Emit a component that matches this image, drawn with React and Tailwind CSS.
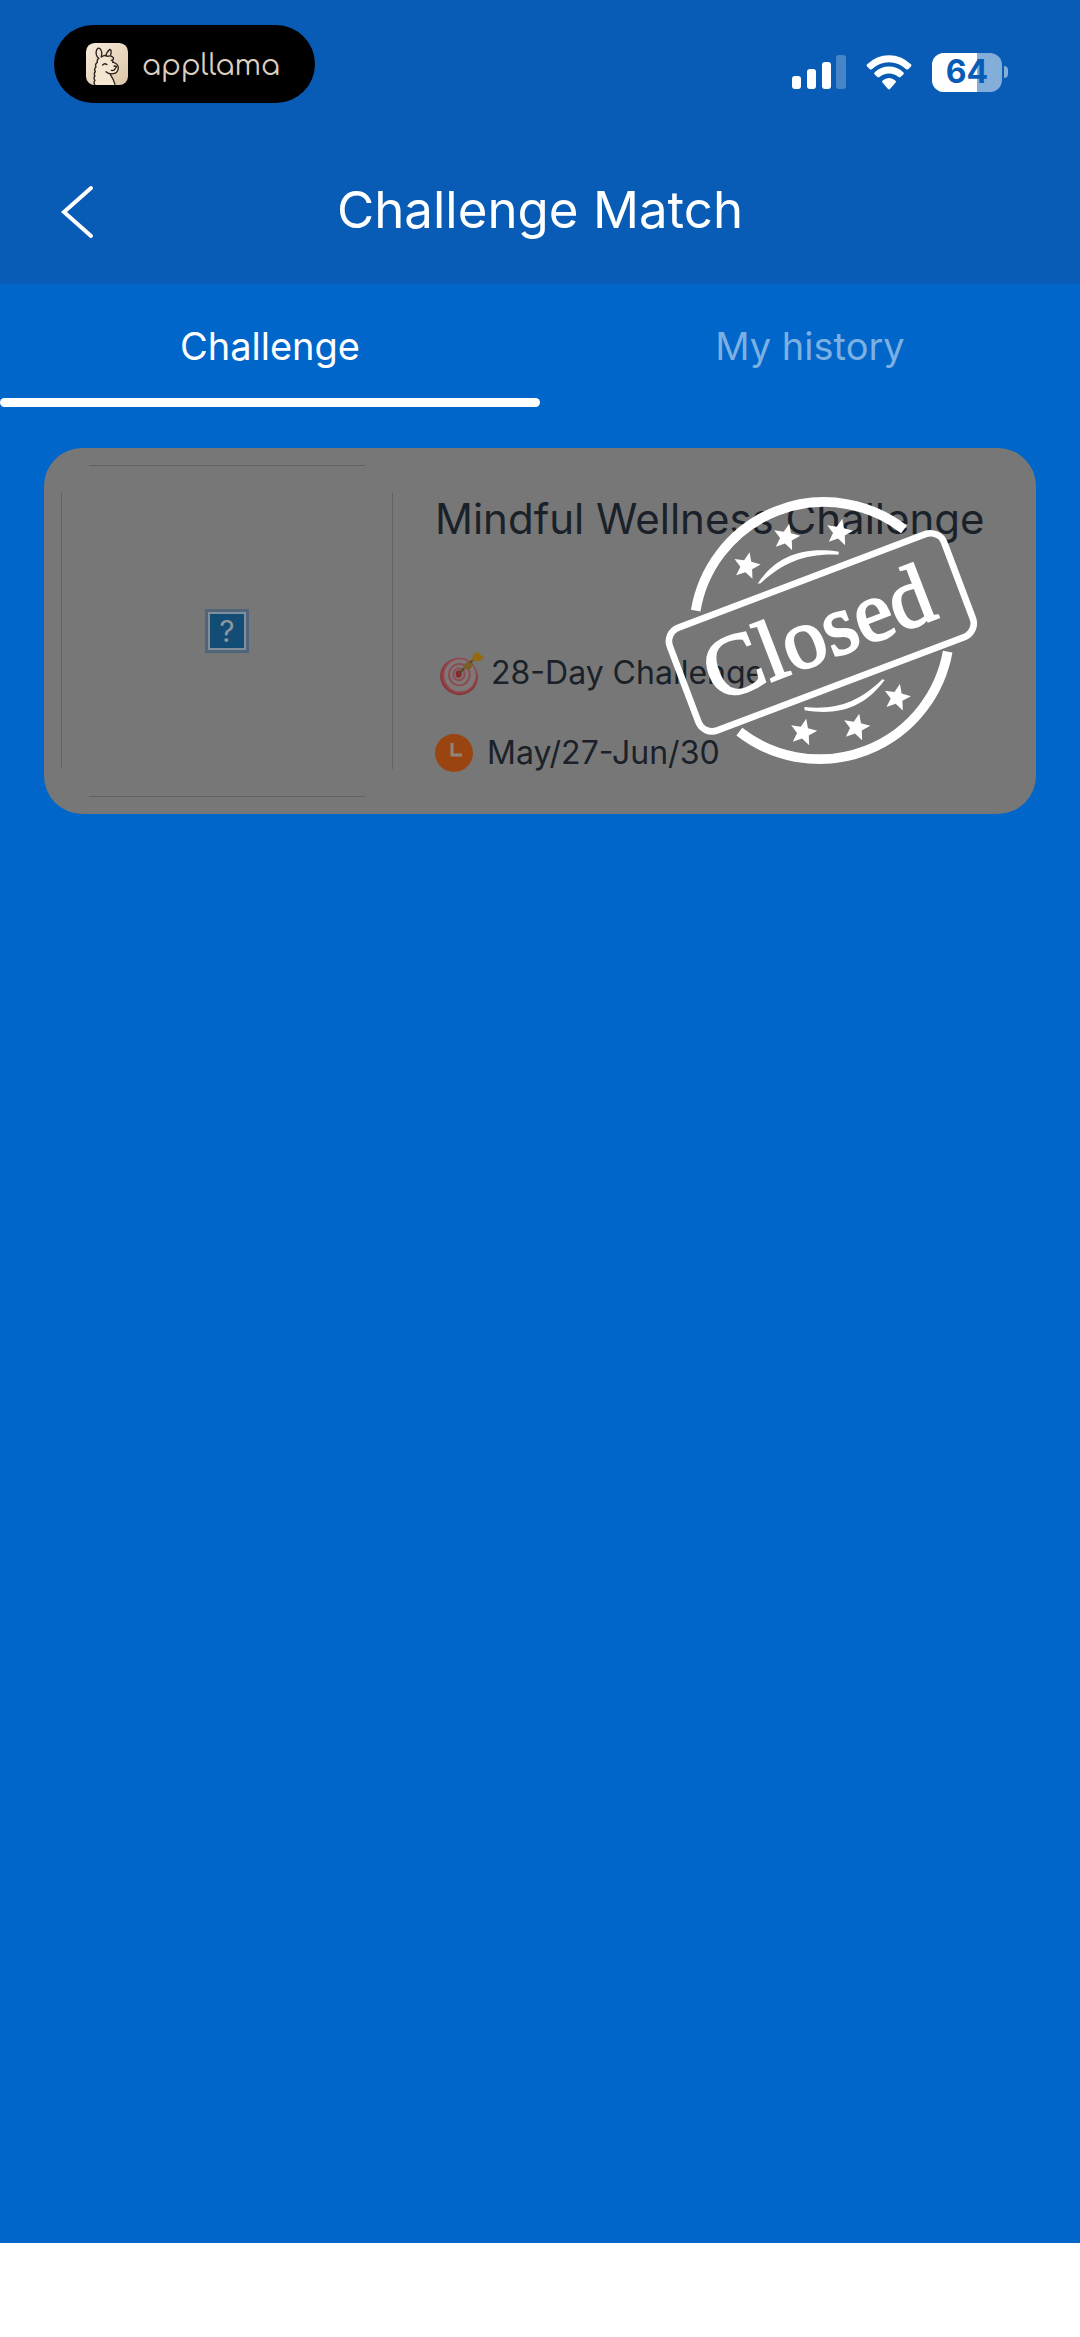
import React, { useState } from 'react';

const TABS = [
  { id: 'challenge', label: 'Challenge' },
  { id: 'history', label: 'My history' },
];

const STARS = [
  [290, 258],
  [409, 172],
  [568, 157],
  [460, 757],
  [619, 742],
  [741, 653],
];

const LlamaIcon = () => (
  <svg viewBox="0 0 126 126" className="h-[42px] w-[42px]" aria-hidden="true">
    <defs>
      <linearGradient id="llamaBg" x1="0" y1="0" x2="1" y2="1">
        <stop offset="0" stopColor="#f8ecdc" />
        <stop offset="1" stopColor="#dcc5a6" />
      </linearGradient>
    </defs>
    <rect width="126" height="126" rx="26" fill="url(#llamaBg)" />
    <path
      d="M26 126 Q22 118 27 112 Q21 105 27 99 Q22 92 28 86 Q23 78 30 72 Q26 63 34 58 Q32 50 40 46 L44 42 Q62 36 76 52 Q86 56 94 66 Q98 78 92 84 Q84 94 72 90 Q80 104 86 126 Z"
      fill="#f5e6d1"
    />
    <g fill="none" stroke="#2a211c" strokeWidth="4" strokeLinecap="round" strokeLinejoin="round">
      <path d="M26 124 Q22 118 27 112 Q21 105 27 99 Q22 92 28 86 Q23 78 30 72 Q26 63 34 58 Q32 50 38 46" />
      <path d="M38 46 Q28 38 31 23 Q35 12 42 17 Q50 26 46 40" />
      <path d="M60 38 Q62 26 72 19 Q78 20 74 36" />
      <path d="M46 42 Q56 34 64 40 Q76 36 82 44 Q84 50 76 52 Q84 54 80 58" />
      <path d="M82 58 Q96 62 97 74 Q96 90 82 92 Q68 94 60 86" />
      <path d="M50 66 Q56 59 63 65" />
      <path d="M84 69 L92 70 L88 76 Q86 84 76 82" />
      <path d="M73 94 Q82 108 87 124" />
    </g>
  </svg>
);

const SignalIcon = () => (
  <svg viewBox="0 0 54 36" className="h-9 w-[54px]" fill="#fff" aria-hidden="true">
    <rect x="0" y="22" width="9" height="13" rx="3" />
    <rect x="15" y="15" width="9" height="20" rx="3" />
    <rect x="30" y="8" width="9" height="27" rx="3" />
    <rect x="44" y="1" width="10" height="34" rx="3" opacity="0.25" />
  </svg>
);

const WifiIcon = () => (
  <svg viewBox="0 0 138 106" className="h-[35px] w-[46px]" fill="#fff" aria-hidden="true">
    <path d="M2 29 Q31 1 69 1 Q107 1 136 29 Q138 32 136 34 L127 43 Q124 45 121 43 Q98 22 69 22 Q40 22 17 43 Q14 45 11 43 L2 34 Q0 32 2 29 Z" />
    <path d="M25 53 Q44 35 69 35 Q94 35 113 53 Q115 56 113 58 L104 67 Q101 69 98 67 Q86 56 69 56 Q52 56 40 67 Q37 69 34 67 L25 58 Q23 56 25 53 Z" />
    <path d="M49 78 Q58 70 69 70 Q80 70 89 78 Q91 81 89 83 L72 103 Q69 106 66 103 L49 83 Q47 81 49 78 Z" />
  </svg>
);

const Battery = ({ level }) => (
  <div className="flex items-center gap-0.5">
    <div className="relative flex h-[39px] w-[70px] items-center justify-center overflow-hidden rounded-xl bg-[#84aeda]">
      <div className="absolute inset-y-0 left-0 bg-white" style={{ width: `${level}%` }} />
      <span className="relative text-[32px] leading-none font-bold text-[#095cb5]">{level}</span>
    </div>
    <div className="h-3 w-1 rounded-r-full bg-[#84aeda]" />
  </div>
);

const TargetIcon = () => (
  <svg viewBox="0 0 138 138" className="h-[46px] w-[46px]" aria-hidden="true">
    <ellipse cx="60" cy="80" rx="57" ry="55" transform="rotate(30 60 80)" fill="#863a3a" />
    <ellipse cx="62" cy="76" rx="52" ry="53" fill="#94474c" />
    <ellipse cx="63" cy="76" rx="47" ry="48" fill="#7e7878" />
    <g fill="none" stroke="#8d4c50" strokeWidth="6">
      <ellipse cx="61" cy="74" rx="31" ry="32" />
      <ellipse cx="60" cy="73" rx="17" ry="18" />
    </g>
    <ellipse cx="59" cy="72" rx="9" ry="11" fill="#8d2433" />
    <path d="M60 70 L102 30" stroke="#59491f" strokeWidth="6" strokeLinecap="round" />
    <path d="M72 46 L88 34 L102 44 L94 58 L76 58 Z" fill="#7b5f2a" />
    <path d="M98 30 L104 12 L118 5 L123 14 L135 20 L124 32 L108 34 Z" fill="#94690f" />
  </svg>
);

const ClockIcon = () => (
  <svg viewBox="0 0 38 38" className="h-[38px] w-[38px]" aria-hidden="true">
    <circle cx="19" cy="19" r="19" fill="#9a4511" />
    <path d="M17 9 V21 H27" fill="none" stroke="#8f8580" strokeWidth="3" />
  </svg>
);

const ClosedStamp = () => (
  <svg viewBox="0 0 1020 900" className="h-[300px] w-[340px]" role="img" aria-label="Closed">
    <g fill="none" stroke="#fff">
      <path d="M137 392 A391 391 0 0 1 762 148" strokeWidth="29" />
      <path d="M893 515 A391 391 0 0 1 268 755" strokeWidth="29" />
      <rect
        x="74"
        y="292"
        width="880"
        height="330"
        rx="44"
        strokeWidth="20"
        transform="rotate(-20.7 514 457)"
      />
    </g>
    <g fill="#fff">
      <path d="M323 311 C375 232 455 198 567 215 L565 224 C468 220 400 246 332 310 Z" />
      <path d="M463 681 C560 690 625 668 697 598 L704 600 C645 680 570 708 464 691 Z" />
      {STARS.map(([x, y]) => (
        <path
          key={x}
          d="M0 -42 L11 -15 L40 -13 L18 6 L25 34 L0 19 L-25 34 L-18 6 L-40 -13 L-11 -15 Z"
          transform={`translate(${x} ${y}) rotate(12)`}
        />
      ))}
      <text
        transform="translate(200 667) rotate(-21)"
        stroke="#fff"
        strokeWidth="7"
        fontFamily="Liberation Serif, serif"
        fontSize="258"
      >
        Closed
      </text>
    </g>
  </svg>
);

const ChallengeCard = ({ title, duration, dates }) => (
  <article className="relative mx-11 mt-[41px] flex rounded-[38px] bg-[#777777] p-[17px] text-[#1a2129]">
    <div className="relative flex h-[332px] w-[332px] shrink-0 items-center justify-center">
      <span className="absolute inset-x-7 inset-y-0 border-y border-[#626262]" />
      <span className="absolute inset-x-0 inset-y-7 border-x border-[#626262]" />
      <div className="flex h-11 w-11 items-center justify-center border-3 border-[#50647a] bg-[#808f99] p-0.5">
        <span className="flex h-full w-full items-center justify-center bg-[#134d75] text-[30px] leading-none text-[#8b989f]">
          ?
        </span>
      </div>
    </div>
    <div className="flex min-w-0 flex-1 flex-col pt-[26px] pl-10">
      <h2 className="pl-0.5 text-[42px] leading-[56px] whitespace-nowrap">{title}</h2>
      <div className="mt-[102px] flex h-12 items-center gap-1.5 pl-1.5 text-[32px]">
        <TargetIcon />
        <span>{duration}</span>
      </div>
      <div className="mt-8 flex h-12 items-center gap-3.5 pl-0.5 text-[32px]">
        <ClockIcon />
        <span>{dates}</span>
      </div>
    </div>
    <div className="absolute top-8 right-[46px]">
      <ClosedStamp />
    </div>
  </article>
);

const App = () => {
  const [activeTab, setActiveTab] = useState('challenge');

  return (
    <div className="flex min-h-screen flex-col bg-[#0066c9] font-[Inter,sans-serif]">
      <header className="bg-[#095cb5] text-white">
        <div className="flex h-36 items-center justify-between pr-[72px] pb-4 pl-[54px]">
          <div className="flex h-[78px] w-[261px] items-center gap-3.5 rounded-full bg-black pl-8">
            <LlamaIcon />
            <span className="pt-1 font-[Comfortaa,Lato,sans-serif] text-[28px] leading-none text-[#dccfc0]">
              appllama
            </span>
          </div>
          <div className="flex items-center gap-5 pt-4">
            <SignalIcon />
            <WifiIcon />
            <Battery level={64} />
          </div>
        </div>
        <div className="grid h-[140px] grid-cols-[160px_1fr_160px] items-center pb-2">
          <button type="button" aria-label="Back" className="flex h-20 items-center pt-1 pl-[60px]">
            <svg viewBox="0 0 36 54" className="h-[54px] w-9" fill="none" aria-hidden="true">
              <path d="M31 3 L4 27 L31 51" stroke="#fff" strokeWidth="4" strokeLinecap="round" />
            </svg>
          </button>
          <h1 className="text-center text-[51px] leading-[60px]">Challenge Match</h1>
        </div>
      </header>

      <nav className="grid grid-cols-2">
        {TABS.map((tab) => (
          <button
            key={tab.id}
            type="button"
            onClick={() => setActiveTab(tab.id)}
            className={`flex flex-col items-center text-[38px] ${
              activeTab === tab.id ? 'text-white' : 'text-[#7db0e2]'
            }`}
          >
            <span className="pt-[38px] pb-7 leading-[48px]">{tab.label}</span>
            <span
              className={`h-[9px] w-full rounded-full ${
                activeTab === tab.id ? 'bg-white' : 'bg-transparent'
              }`}
            />
          </button>
        ))}
      </nav>

      <main className="flex-1">
        {activeTab === 'challenge' && (
          <ChallengeCard
            title="Mindful Wellness Challenge"
            duration="28-Day Challenge"
            dates="May/27-Jun/30"
          />
        )}
      </main>

      <footer className="h-[94px] bg-white" />
    </div>
  );
};

export default App;
